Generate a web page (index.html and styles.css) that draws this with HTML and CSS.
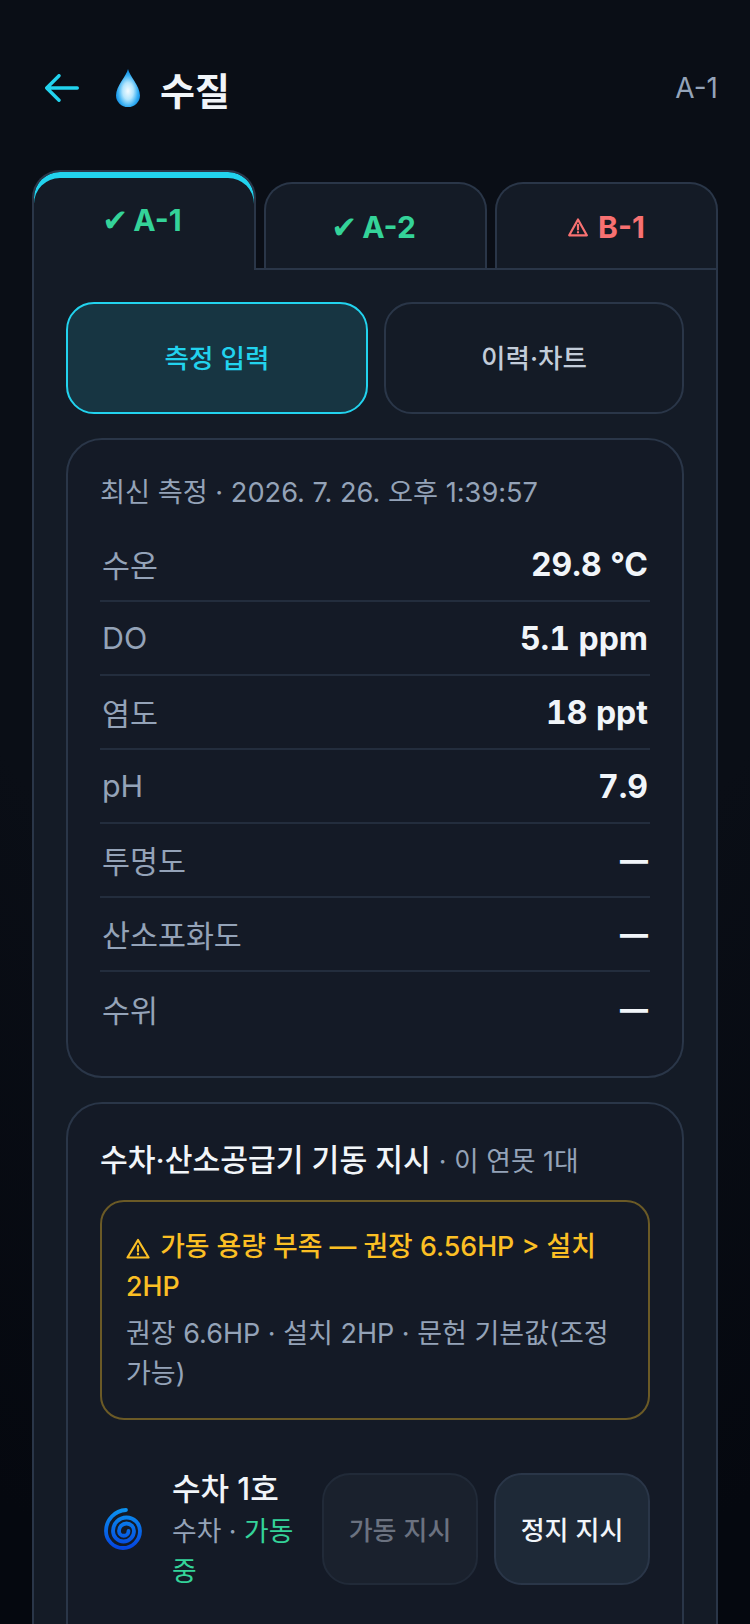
FILE: index.html
```html
<!DOCTYPE html>
<html lang="ko">
<head>
    <meta charset="UTF-8">
    <meta name="viewport" content="width=device-width, initial-scale=1.0">
    <title>수질</title>
    <link rel="stylesheet" href="styles.css">
</head>
<body>
    <header class="top-bar">
        <button class="back-button" aria-label="뒤로">
            <svg width="34" height="28" viewBox="0 0 34 28" fill="none" stroke="#22d3ee" stroke-width="3.4" stroke-linecap="round" stroke-linejoin="round">
                <path d="M32.300 14H1.700M14 1.700L1.700 14L14 26.300"/>
            </svg>
        </button>
        <svg class="drop-icon" width="24" height="38" viewBox="0 0 24 38">
            <defs>
                <radialGradient id="dropFill" cx="0.5" cy="0.58" r="0.55">
                    <stop offset="0" stop-color="#f4fbff"/>
                    <stop offset="0.4" stop-color="#b4e6fd"/>
                    <stop offset="0.75" stop-color="#35aef3"/>
                    <stop offset="1" stop-color="#0b86dc"/>
                </radialGradient>
            </defs>
            <path d="M12 0C13.500 7 24 17 24 26.500A12 11.500 0 0 1 0 26.500C0 17 10.500 7 12 0Z" fill="url(#dropFill)"/>
        </svg>
        <h1 class="page-title">수질</h1>
        <span class="pond-name">A-1</span>
    </header>

    <main class="pond-area">
        <nav class="pond-tabs">
            <a class="pond-tab active ok"><span class="tick">✔</span> A-1</a>
            <a class="pond-tab ok"><span class="tick">✔</span> A-2</a>
            <a class="pond-tab danger">
                <svg class="warn-icon" width="20" height="19" viewBox="0 0 20 19" fill="none" stroke="currentColor" stroke-width="2.200" stroke-linejoin="round">
                    <path d="M10 1.500L18.800 17.300H1.200Z"/>
                    <path d="M10 6.800V11.500M10 14V14.500" stroke-linecap="round"/>
                </svg>
                B-1
            </a>
        </nav>

        <section class="panel">
            <div class="mode-switch">
                <button class="mode-button active">측정 입력</button>
                <button class="mode-button">이력·차트</button>
            </div>

            <div class="card readings">
                <p class="latest">최신 측정 · 2026. 7. 26. 오후 1:39:57</p>
                <div class="reading"><span>수온</span><b>29.8 °C</b></div>
                <div class="reading"><span>DO</span><b>5.1 ppm</b></div>
                <div class="reading"><span>염도</span><b>18 ppt</b></div>
                <div class="reading"><span>pH</span><b>7.9</b></div>
                <div class="reading"><span>투명도</span><b class="empty">—</b></div>
                <div class="reading"><span>산소포화도</span><b class="empty">—</b></div>
                <div class="reading"><span>수위</span><b class="empty">—</b></div>
            </div>

            <div class="card orders">
                <h2 class="card-title">수차·산소공급기 기동 지시 <small>· 이 연못 1대</small></h2>
                <div class="alert">
                    <p class="alert-title">
                        <svg class="alert-icon" width="24" height="21" viewBox="0 0 24 21" fill="none" stroke="currentColor" stroke-width="2.200" stroke-linejoin="round">
                            <path d="M12 2L22.500 19.500H1.500Z"/>
                            <path d="M12 8V13M12 15.500V16.500" stroke-linecap="round"/>
                        </svg>
                        가동 용량 부족 — 권장 6.56HP &gt; 설치 2HP
                    </p>
                    <p class="alert-text">권장 6.6HP · 설치 2HP · 문헌 기본값(조정 가능)</p>
                </div>
                <div class="device">
                    <svg class="device-icon" width="40" height="42" viewBox="0 0 40 42" fill="none" stroke-linecap="round">
                        <defs>
                            <linearGradient id="spinFill" x1="0" y1="0" x2="0" y2="1">
                                <stop offset="0" stop-color="#0b90ee"/>
                                <stop offset="1" stop-color="#0546e0"/>
                            </linearGradient>
                        </defs>
                        <path d="M22 2A21 21 0 0 0 2 23A17 17 0 0 0 36 23A13.500 13.500 0 0 0 9 23A10.500 10.500 0 0 0 30 23A7.500 7.500 0 0 0 15 23A4.750 4.750 0 0 0 24.500 23" stroke="url(#spinFill)" stroke-width="3.800"/>
                    </svg>
                    <div class="device-info">
                        <div class="device-name">수차 1호</div>
                        <div class="device-state">수차 · <span class="running">가동 중</span></div>
                    </div>
                    <button class="order-button" disabled>가동 지시</button>
                    <button class="order-button">정지 지시</button>
                </div>
            </div>
        </section>
    </main>
</body>
</html>
```

FILE: styles.css
```css
* {
    box-sizing: border-box;
}

html, body {
    height: 100%;
}

body {
    margin: 0;
    overflow: hidden;
    background: radial-gradient(ellipse 130% 100% at 50% 0, #0a0e16 60%, #05080f 100%);
    color: #f1f5f9;
    font-family: "Inter", "Noto Sans CJK KR", sans-serif;
}

p, h1, h2 {
    margin: 0;
}

button {
    font-family: inherit;
}

.top-bar {
    display: flex;
    align-items: center;
    height: 176px;
    padding: 0 32px 0 45px;
}

.back-button {
    display: flex;
    padding: 0;
    margin-right: 37px;
    background: none;
    border: none;
}

.drop-icon {
    margin-right: 20px;
}

.page-title {
    flex: 1;
    font-size: 38px;
    font-weight: 700;
}

.pond-name {
    font-size: 28px;
    color: #94a3b8;
}

.pond-area {
    margin: -6px 32px 0;
}

.pond-tabs {
    display: flex;
    align-items: flex-end;
    gap: 8px;
    height: 100px;
    position: relative;
    z-index: 1;
}

.pond-tab {
    flex: 1;
    display: flex;
    align-items: center;
    justify-content: center;
    gap: 5px;
    height: 86px;
    margin-bottom: 2px;
    padding-top: 2px;
    background: #141b26;
    border: 2px solid #2a3648;
    border-bottom: none;
    border-radius: 28px 28px 0 0;
    font-size: 30px;
    font-weight: 700;
}

.pond-tab.active {
    flex: none;
    width: 224px;
    height: 100px;
    margin-bottom: 0;
    padding-bottom: 2px;
    padding-top: 0;
    box-shadow: inset 0 6px 0 #22d3ee;
}

.pond-tab.ok {
    color: #34d399;
}

.pond-tab.danger {
    color: #f87171;
}

.warn-icon {
    margin-right: 5px;
}

.tick {
    margin-left: -4px;
    font-family: "DejaVu Sans", sans-serif;
    font-size: 31px;
}

.panel {
    display: flex;
    flex-direction: column;
    gap: 24px;
    margin-top: -2px;
    min-height: 1400px;
    padding: 32px;
    background: #141b26;
    border: 2px solid #2a3648;
}

.mode-switch {
    display: flex;
    gap: 16px;
}

.mode-button {
    flex: 1;
    height: 112px;
    padding-bottom: 4px;
    background: #141b26;
    border: 2px solid #2a3648;
    border-radius: 28px;
    color: #c2ccd9;
    font-size: 26.600px;
    font-weight: 500;
}

.mode-button.active {
    flex: none;
    width: 302px;
    background: #173542;
    border-color: #22d3ee;
    color: #22d3ee;
}

.card {
    padding: 32px;
    background: #141a26;
    border: 2px solid #2a3648;
    border-radius: 36px;
}

.card.readings {
    padding-bottom: 30px;
}

.card.orders {
    padding-bottom: 66px;
}

.latest {
    margin-bottom: 14px;
    font-size: 27.200px;
    line-height: 42px;
    color: #94a3b8;
}

.reading {
    display: flex;
    justify-content: space-between;
    align-items: center;
    height: 74px;
    padding: 0 2px;
    border-bottom: 2px solid #232d3d;
    font-size: 30.400px;
    color: #94a3b8;
}

.reading:last-child {
    border-bottom: none;
}

.reading b {
    font-size: 32px;
    font-weight: 700;
    font-variant-numeric: tabular-nums;
    color: #f1f5f9;
}

.reading b.empty {
    font-size: 28px;
    font-weight: 800;
}

.card-title {
    margin-bottom: 15px;
    font-size: 30.200px;
    line-height: 48px;
    font-weight: 500;
}

.card-title small {
    font-size: 26.800px;
    font-weight: 400;
    color: #94a3b8;
}

.alert {
    padding: 24px;
    margin-bottom: 47px;
    border: 2px solid #6b5a26;
    border-radius: 24px;
}

.alert-title {
    font-size: 26.800px;
    line-height: 40px;
    font-weight: 500;
    color: #fbbf24;
}

.alert-icon {
    margin-right: 3px;
    vertical-align: -3px;
}

.alert-text {
    margin-top: 8px;
    font-size: 27px;
    line-height: 40px;
    color: #94a3b8;
}

.device {
    display: flex;
    align-items: center;
    gap: 16px;
}

.device-icon {
    margin-left: 4px;
    margin-right: 12px;
    flex: none;
}

.device-info {
    flex: 1;
    min-width: 0;
}

.device-name {
    font-size: 31px;
    line-height: 44px;
    font-weight: 500;
}

.device-state {
    font-size: 26.800px;
    line-height: 40px;
    color: #94a3b8;
}

.running {
    color: #34d399;
}

.order-button {
    flex: none;
    width: 156px;
    height: 112px;
    padding-bottom: 3px;
    background: #1e2937;
    border: 2px solid #2a3648;
    border-radius: 28px;
    color: #f1f5f9;
    font-size: 26px;
    font-weight: 500;
}

.order-button:disabled {
    background: #1a212d;
    border-color: #212a38;
    color: #6b7280;
}
```
